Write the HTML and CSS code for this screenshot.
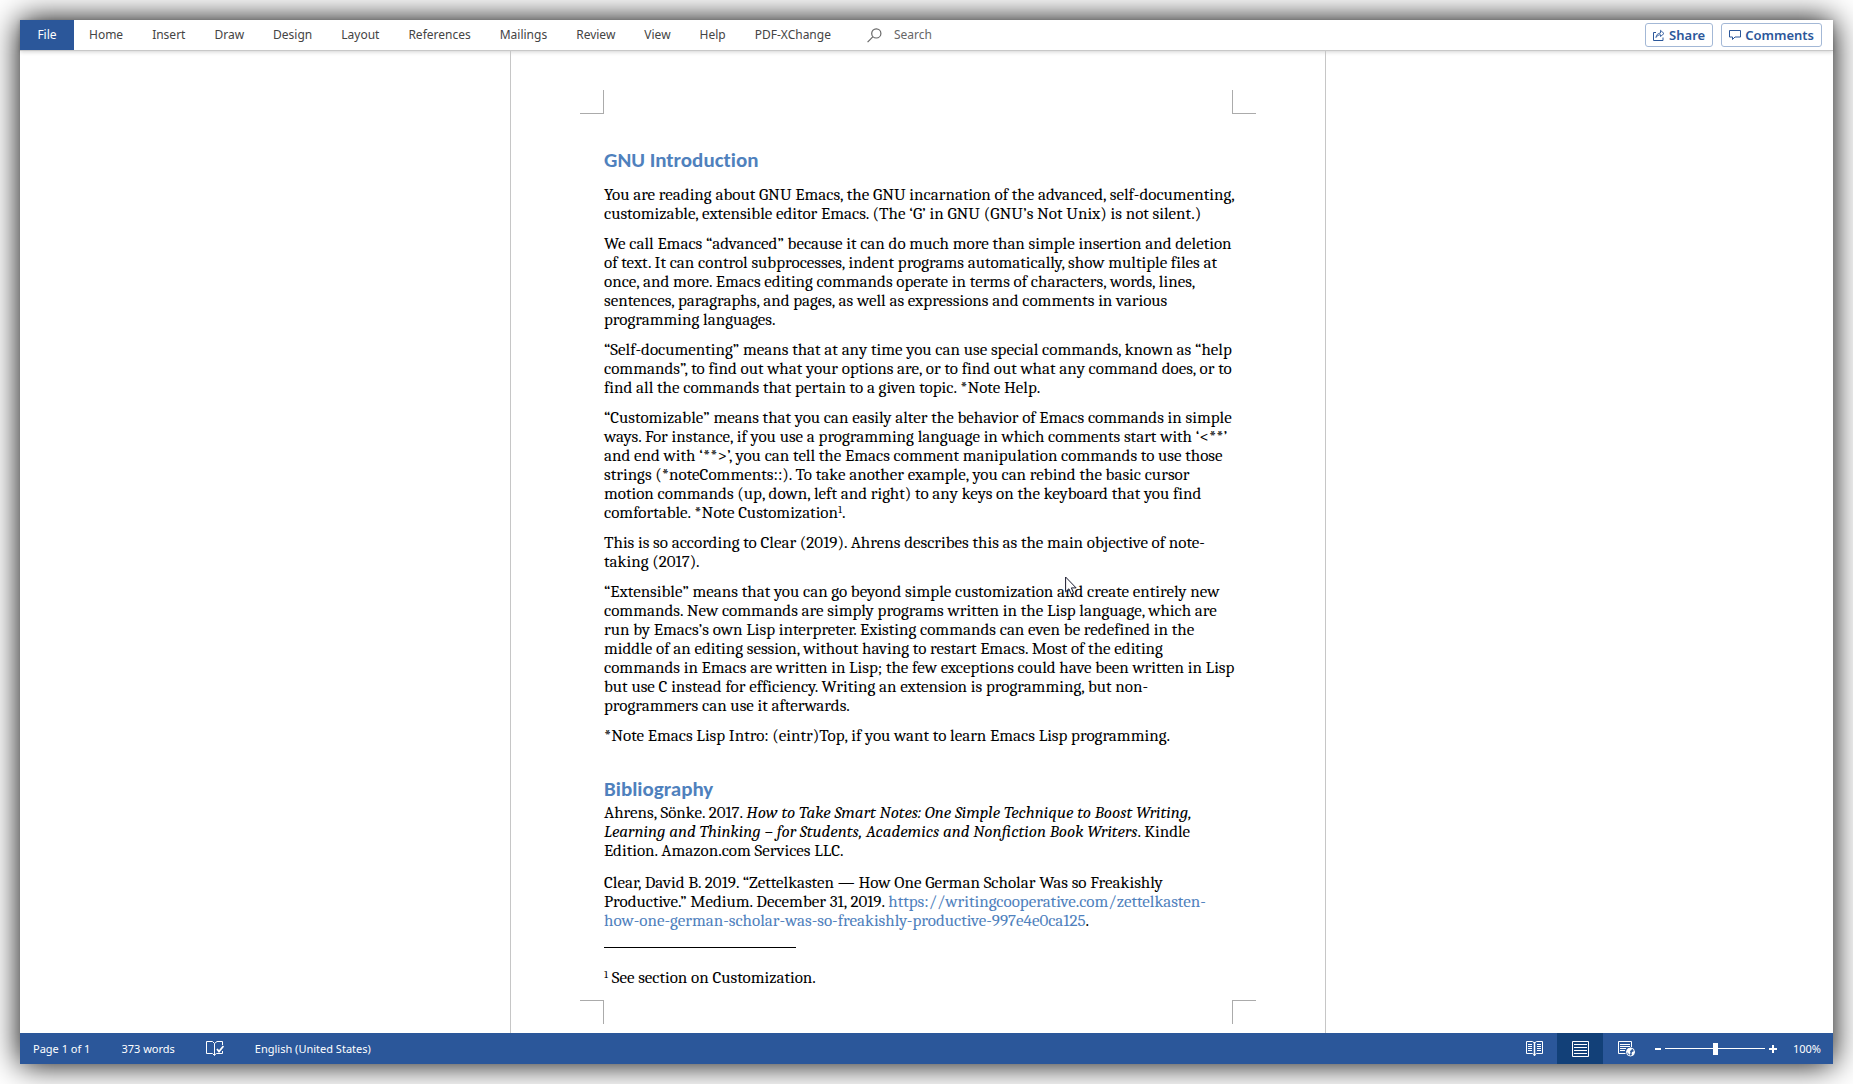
FILE: index.html
```html
<!DOCTYPE html>
<html lang="en">
<head>
<meta charset="utf-8">
<title>GNU Introduction</title>
<link rel="stylesheet" href="styles.css">
</head>
<body>
<div class="window">
  <header class="ribbon">
    <nav class="tabs" aria-label="Ribbon tabs">
      <button class="tab tab-file">File</button>
      <button class="tab">Home</button>
      <button class="tab">Insert</button>
      <button class="tab">Draw</button>
      <button class="tab">Design</button>
      <button class="tab">Layout</button>
      <button class="tab">References</button>
      <button class="tab">Mailings</button>
      <button class="tab">Review</button>
      <button class="tab">View</button>
      <button class="tab">Help</button>
      <button class="tab">PDF-XChange</button>
    </nav>
    <label class="search">
      <svg width="15" height="15" viewBox="0 0 15 15" fill="none" stroke="#666" stroke-width="1.2"><circle cx="9.3" cy="5.4" r="4.6"/><path d="M6 8.7 .6 14.2"/></svg>
      <input type="text" placeholder="Search" aria-label="Search">
    </label>
    <div class="actions">
      <button class="action">
        <svg width="12" height="12" viewBox="0 0 12 12" fill="none" stroke="#2b579a"><path d="M3 3.5H.5v8h9.500V8.500"/><path d="M3 8.500c.3-2.700 1.700-4.200 4.500-4.500V1.300L11 4.500 7.500 7.500V5.700C5.500 5.700 4 6.700 3 8.500z" stroke-width=".9"/></svg>
        Share
      </button>
      <button class="action">
        <svg width="12" height="12" viewBox="0 0 12 12" fill="none" stroke="#2b579a"><path d="M.5 1.500h11v6.500H6L3.500 10.500V8H.5z"/></svg>
        Comments
      </button>
    </div>
  </header>

  <main class="desk">
    <article class="page">
      <div class="crops crops-top"><i></i><i></i></div>
      <div class="text">
        <h1>GNU Introduction</h1>
        <p>You are reading about GNU Emacs, the GNU incarnation of the advanced, self-documenting,<br>
        customizable, extensible editor Emacs. (The ‘G’ in GNU (GNU’s Not Unix) is not silent.)</p>
        <p>We call Emacs “advanced” because it can do much more than simple insertion and deletion<br>
        of text. It can control subprocesses, indent programs automatically, show multiple files at<br>
        once, and more. Emacs editing commands operate in terms of characters, words, lines,<br>
        sentences, paragraphs, and pages, as well as expressions and comments in various<br>
        programming languages.</p>
        <p>“Self-documenting” means that at any time you can use special commands, known as “help<br>
        commands”, to find out what your options are, or to find out what any command does, or to<br>
        find all the commands that pertain to a given topic. *Note Help.</p>
        <p>“Customizable” means that you can easily alter the behavior of Emacs commands in simple<br>
        ways. For instance, if you use a programming language in which comments start with ‘&lt;**’<br>
        and end with ‘**&gt;’, you can tell the Emacs comment manipulation commands to use those<br>
        strings (*noteComments::). To take another example, you can rebind the basic cursor<br>
        motion commands (up, down, left and right) to any keys on the keyboard that you find<br>
        comfortable. *Note Customization<sup>1</sup>.</p>
        <p>This is so according to Clear (2019). Ahrens describes this as the main objective of note-<br>
        taking (2017).</p>
        <p>“Extensible” means that you can go beyond simple customization and create entirely new<br>
        commands. New commands are simply programs written in the Lisp language, which are<br>
        run by Emacs’s own Lisp interpreter. Existing commands can even be redefined in the<br>
        middle of an editing session, without having to restart Emacs. Most of the editing<br>
        commands in Emacs are written in Lisp; the few exceptions could have been written in Lisp<br>
        but use C instead for efficiency. Writing an extension is programming, but non-<br>
        programmers can use it afterwards.</p>
        <p>*Note Emacs Lisp Intro: (eintr)Top, if you want to learn Emacs Lisp programming.</p>
        <section class="bibliography">
          <h2>Bibliography</h2>
          <p>Ahrens, Sönke. 2017. <em>How to Take Smart Notes: One Simple Technique to Boost Writing,<br>
          Learning and Thinking – for Students, Academics and Nonfiction Book Writers</em>. Kindle<br>
          Edition. Amazon.com Services LLC.</p>
          <p>Clear, David B. 2019. “Zettelkasten — How One German Scholar Was so Freakishly<br>
          Productive.” Medium. December 31, 2019. <a href="https://writingcooperative.com/zettelkasten-how-one-german-scholar-was-so-freakishly-productive-997e4e0ca125">https://writingcooperative.com/zettelkasten-<br>how-one-german-scholar-was-so-freakishly-productive-997e4e0ca125</a>.</p>
        </section>
        <hr>
        <p><sup>1</sup> See section on Customization.</p>
      </div>
      <div class="crops crops-bottom"><i></i><i></i></div>
      <svg class="pointer" width="13" height="20" viewBox="0 0 13 20" fill="#fff" stroke="#1a1a2e"><path d="M.6 1v14.800l3.300-3 2.300 5.400 2.500-1-2.300-5.300h4.700z"/></svg>
    </article>
  </main>

  <footer class="status">
    <div class="status-info">
      <span>Page 1 of 1</span>
      <span>373 words</span>
      <button class="proof" aria-label="Proofing">
        <svg width="18" height="15" viewBox="0 0 18 15" fill="none" stroke="#fff"><path d="M16.500 4V.5H11L8.500 2.500 6.500.5H.5v12h6l2 2V2.500M8.500 14l2-1.500h6V10"/><path d="m11 8 2 2.500L17.500 5" stroke-width="1.800"/></svg>
      </button>
      <span>English (United States)</span>
    </div>
    <div class="views">
      <button class="view" aria-label="Read mode">
        <svg width="17" height="15" viewBox="0 0 17 15" fill="none" stroke="#fff"><path d="M.5.5h6l2 1.500 2-1.500h6v12h-6l-2 1.500-2-1.500h-6z"/><path d="M8.500 1v14" stroke-width="1.500"/><path d="M2 3.500h4M2 5.500h4M2 7.500h4M2 9.500h4M11 3.500h4M11 5.500h4M11 7.500h4M11 9.500h4"/></svg>
      </button>
      <button class="view view-on" aria-label="Print layout">
        <svg width="17" height="16" viewBox="0 0 17 16" fill="none" stroke="#fff"><path d="M.5.5h16v15H.5zM2 3.500h13M2 6.500h13M2 9.500h13M2 12.500h13"/></svg>
      </button>
      <button class="view" aria-label="Web layout">
        <svg width="17" height="16" viewBox="0 0 17 16" fill="none" stroke="#fff"><path d="M13.500 6V.5H.5v12h7M2 3.500h10M2 5.500h10M2 7.500h6M2 9.500h5"/><circle cx="12.500" cy="11" r="4" fill="#2b579a"/><path d="M9 9c1-2 3-2.500 5-2l-.5 2-1.500 1 .5 2-1 2-1.500-2-1.500-1zM14 11l2.500-1v2l-2 2.500-1-1.500z" fill="#fff" stroke="none"/></svg>
      </button>
    </div>
    <div class="zoom">
      <button class="step" aria-label="Zoom out"><svg width="6" height="8" viewBox="0 0 6 8"><path d="M0 3h6v2H0z" fill="#fff"/></svg></button>
      <input type="range" min="0" max="100" value="50" aria-label="Zoom">
      <button class="step" aria-label="Zoom in"><svg width="8" height="8" viewBox="0 0 8 8"><path d="M3 0h2v3h3v2H5v3H3V5H0V3h3z" fill="#fff"/></svg></button>
      <button class="percent">100%</button>
    </div>
  </footer>
</div>
</body>
</html>
```
FILE: styles.css
```css
* { box-sizing: border-box; }

body {
  margin: 0;
  min-height: 100vh;
  padding: 20px;
  display: flex;
  background: #fff;
  font: 12px/16px "Noto Sans", "Open Sans", sans-serif;
}

button, input {
  margin: 0;
  padding: 0;
  border: 0;
  background: none;
  color: inherit;
  font: inherit;
}

svg { display: block; flex: none; }

.window {
  flex: 1;
  min-width: 0;
  display: flex;
  flex-direction: column;
  background: #fff;
  box-shadow: 0 0 30px #000;
}

/* Ribbon */
.ribbon {
  position: relative;
  display: flex;
  align-items: stretch;
  height: 31px;
  padding-right: 11px;
  border-bottom: 1px solid #c8c8c8;
  background: #fff;
  box-shadow: 0 1px 4px rgba(0, 0, 0, .18);
  color: #444;
}

.tabs { display: flex; gap: 1px; }
.tab { padding: 0 14px; }
.tab-file {
  width: 54px;
  background: #2b579a;
  color: #fff;
}

.search {
  display: flex;
  align-items: center;
  gap: 12px;
  padding-left: 22px;
}
.search input { width: 160px; }
.search input::placeholder { color: #666; opacity: 1; }

.actions {
  display: flex;
  align-items: center;
  gap: 8px;
  margin-left: auto;
}
.action {
  display: flex;
  align-items: center;
  gap: 4px;
  height: 24px;
  padding: 0 7px;
  border: 1px solid #a3b8d6;
  border-radius: 3px;
  color: #2b579a;
  font-size: 13px;
  font-weight: 600;
}

/* Document */
.desk {
  flex: 1;
  display: flex;
  justify-content: center;
  padding-right: 17px;
}

.page {
  position: relative;
  width: 816px;
  display: flex;
  flex-direction: column;
  padding: 39px 69px 9px;
  border: solid #c6c6c6;
  border-width: 0 1px;
}

.crops { display: flex; justify-content: space-between; }
.crops i { width: 24px; height: 24px; border: 0 solid #ababab; }
.crops i:first-child { border-right-width: 1px; }
.crops i:last-child { border-left-width: 1px; }
.crops-top i { border-bottom-width: 1px; }
.crops-bottom { margin-top: auto; }
.crops-bottom i { border-top-width: 1px; }

.text {
  padding: 32px 24px 0;
  color: #000;
  font: 17px/19px Cambria, Caladea, "Noto Serif", "Liberation Serif", serif;
  white-space: nowrap;
}
.text p { margin: 0 0 11px; }

h1, h2 {
  margin: 0 0 11px;
  color: #4f81bd;
  font: bold 21px/28px Calibri, Carlito, Lato, sans-serif;
  font-variant-ligatures: none;
}
h2 { margin: 30px 0 0; }

.bibliography p { margin-bottom: 13px; }
.text a { color: #4f81bd; text-decoration: none; }
sup { font-size: 11px; line-height: 0; vertical-align: 5px; }

hr {
  width: 192px;
  height: 1px;
  margin: 17px 0 20px;
  border: 0;
  background: #000;
}

.pointer { position: absolute; left: 554px; top: 525px; }

/* Status bar */
.status {
  display: flex;
  align-items: stretch;
  height: 31px;
  padding: 0 12px 0 13px;
  background: #2b579a;
  color: #fff;
  font-size: 11px;
}
.status-info {
  display: flex;
  align-items: center;
  gap: 31px;
}
.views { display: flex; margin-left: auto; }
.view {
  display: grid;
  place-items: center;
  width: 46px;
}
.view-on { background: #124078; }

.zoom {
  display: flex;
  align-items: center;
  gap: 4px;
  padding-left: 6px;
}
.percent { width: 40px; text-align: right; }
.zoom input {
  appearance: none;
  width: 100px;
  height: 12px;
  background: linear-gradient(#fff, #fff) center / 100% 1px no-repeat;
}
.zoom input::-webkit-slider-thumb {
  appearance: none;
  width: 5px;
  height: 12px;
  background: #fff;
}
```
